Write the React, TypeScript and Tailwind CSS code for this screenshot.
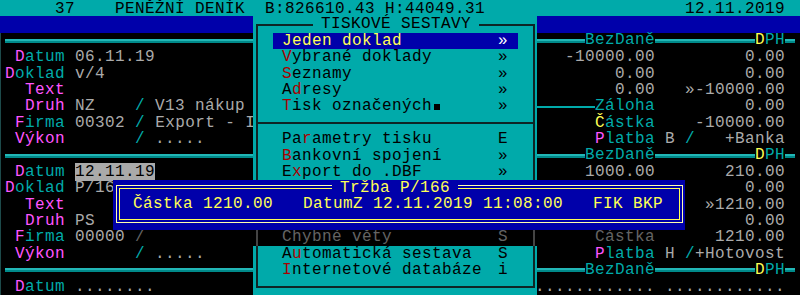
import React from "react";

type Seg = [string, string?];

const MAG = "text-[#FF55FF]";
const TEAL = "text-[#00AAAA]";
const GRAY = "text-[#AAAAAA]";
const YEL = "text-[#FFFF55]";
const DIM = "text-[#646464]";
const RED = "text-[#AA0000]";
const SEL = "bg-[#AAAAAA] text-black";

const row = "h-[16.4px] whitespace-pre";

function Segs({ segs }: { segs: Seg[] }) {
  return (
    <>
      {segs.map(([t, c], i) => (
        <span key={i} className={c}>
          {t}
        </span>
      ))}
    </>
  );
}

function DLine({ className }: { className: string }) {
  return <div className={"h-[4px] shrink-0 bg-[#008a8a] border-t-2 border-[#22b6b6] " + className} />;
}

const leftRows: (Seg[] | "line")[] = [
  "line",
  [[" "], ["D", MAG], ["atum", TEAL], [" "], ["06.11.19", GRAY]],
  [["D", MAG], ["oklad", TEAL], [" "], ["v/4", GRAY]],
  [["  "], ["Text", MAG]],
  [["  "], ["Druh", MAG], [" "], ["NZ", GRAY], ["    "], ["/", TEAL], [" "], ["V13 nákup", GRAY]],
  [[" "], ["F", MAG], ["irma", TEAL], [" "], ["00302", GRAY], [" "], ["/", TEAL], [" "], ["Export - I", GRAY]],
  [[" "], ["Výkon", MAG], ["       "], ["/", TEAL], [" "], [".....", GRAY]],
  "line",
  [[" "], ["D", MAG], ["atum", TEAL], [" "], ["12.11.19", SEL]],
  [["D", MAG], ["oklad", TEAL], [" "], ["P/166", GRAY]],
  [["  "], ["Text", MAG]],
  [["  "], ["Druh", MAG], [" "], ["PS", GRAY]],
  [[" "], ["F", MAG], ["irma", TEAL], [" "], ["00000", GRAY], [" "], ["/", DIM]],
  [[" "], ["Výkon", MAG], ["       "], ["/", TEAL], [" "], [".....", GRAY]],
  "line",
  [[" "], ["D", MAG], ["atum", TEAL], [" "], ["........", GRAY]],
];

function LeftPanel() {
  return (
    <div className="w-[253px] shrink-0 overflow-hidden">
      <div className="h-[16.4px] bg-[#0000AA]" />
      <div className="shadow-[inset_1px_0_0_#1d4a4a]">
        {leftRows.map((r, i) =>
          r === "line" ? (
            <div key={i} className="flex h-[16.4px] items-center pl-[5px]">
              <DLine className="w-full" />
            </div>
          ) : (
            <div key={i} className={row + " pl-[5px]"}>
              <Segs segs={r} />
            </div>
          )
        )}
      </div>
    </div>
  );
}

function HeadLine() {
  return (
    <div className="flex h-[16.4px] items-center">
      <DLine className="w-[48px]" />
      <span className={TEAL}>BezDaně</span>
      <DLine className="w-[100px]" />
      <span className={YEL}>D</span>
      <span className={TEAL}>PH</span>
      <DLine className="w-[10px]" />
    </div>
  );
}

function Nums({ a, b }: { a: React.ReactNode; b: React.ReactNode }) {
  return (
    <div className="flex h-[16.4px] pl-[8px] text-[#AAAAAA]">
      <span className="w-[110px] whitespace-pre text-right">{a}</span>
      <span className="w-[130px] whitespace-pre text-right">{b}</span>
    </div>
  );
}

function RightPanel() {
  return (
    <div className="flex-1 overflow-hidden">
      <div className="h-[16.4px] bg-[#0000AA]" />
      <HeadLine />
      <Nums a="-10000.00" b="0.00" />
      <Nums a="0.00" b="0.00" />
      <Nums a="0.00" b="»-10000.00" />
      <div className="flex h-[16.4px] items-center">
        <div className="h-[2px] w-[58px] bg-[#00AAAA]" />
        <span className={TEAL + " w-[60px]"}>Záloha</span>
        <span className="w-[130px] text-right text-[#AAAAAA]">0.00</span>
      </div>
      <Nums a={<Segs segs={[["Č", YEL], ["ástka", TEAL]]} />} b="-10000.00" />
      <Nums
        a={<Segs segs={[["P", MAG], ["latba", TEAL]]} />}
        b={<Segs segs={[[" B"], [" /", TEAL], ["   +Banka"]]} />}
      />
      <HeadLine />
      <Nums a="1000.00" b="210.00" />
      <Nums a="" b="0.00" />
      <Nums a="" b="»1210.00" />
      <Nums a="" b="0.00" />
      <Nums a={<span className={DIM}>Částka</span>} b="1210.00" />
      <Nums
        a={<Segs segs={[["P", MAG], ["latba", TEAL]]} />}
        b={<Segs segs={[[" H"], [" /", TEAL], ["+Hotovost"]]} />}
      />
      <HeadLine />
      <div className={row + " -ml-[2px] text-[#AAAAAA]"}>............ ............</div>
    </div>
  );
}

type Item = { parts: Seg[]; k: string; active?: boolean; mark?: boolean } | "sep" | "empty" | "shadow";

const items: Item[] = [
  { parts: [["Jeden doklad", YEL]], k: "»", active: true },
  { parts: [["V", RED], ["ybrané doklady"]], k: "»" },
  { parts: [["S", RED], ["eznamy"]], k: "»" },
  { parts: [["A"], ["d", RED], ["resy"]], k: "»" },
  { parts: [["T", RED], ["isk označených"]], k: "»", mark: true },
  "sep",
  { parts: [["Pa"], ["r", RED], ["ametry tisku"]], k: "E" },
  { parts: [["B", RED], ["ankovní spojení"]], k: "»" },
  { parts: [["E"], ["x", RED], ["port do .DBF"]], k: "»" },
  "empty",
  "empty",
  "empty",
  "shadow",
  { parts: [["A"], ["u", RED], ["tomatická sestava"]], k: "S" },
  { parts: [["I", RED], ["nternetové databáze"]], k: "i" },
];

function Menu() {
  return (
    <div className="relative h-[278.8px] w-[284px] shrink-0 bg-[#00AAAA] text-black">
      <div className="ml-[3px] mr-[2px] mt-[7.2px] h-[264.4px] border-2 border-[#0e2626] pt-[7.2px]">
        {items.map((it, i) => {
          if (it === "sep")
            return (
              <div key={i} className="flex h-[16.4px] items-center">
                <div className="h-[2px] w-full bg-[#0e2626]" />
              </div>
            );
          if (it === "empty") return <div key={i} className="h-[16.4px]" />;
          if (it === "shadow")
            return (
              <div key={i} className="-ml-[5px] -mr-[4px] flex h-[16.4px] bg-black text-[#646464]">
                <div className="w-[3px]" />
                <div className="w-[2px] bg-[#444]" />
                <div className="flex w-[275px] pl-[24px]">
                  <span className="w-[216px] whitespace-pre">Chybné věty</span>
                  <span>S</span>
                </div>
                <div className="w-[2px] bg-[#444]" />
              </div>
            );
          return (
            <div
              key={i}
              className={
                "ml-[15px] flex h-[16.4px] w-[245px] pl-[9px] " + (it.active ? "bg-[#0000AA]" : "")
              }
            >
              <span className="w-[216px] whitespace-pre">
                <Segs segs={it.parts} />
                {it.mark && <span className="mx-[2px] inline-block h-[6px] w-[6px] bg-black" />}
              </span>
              <span className={it.active ? "text-white" : ""}>{it.k}</span>
            </div>
          );
        })}
      </div>
      <div className="absolute left-[60px] top-0 h-[16.4px] whitespace-pre bg-[#00AAAA] px-[8px]">
        TISKOVÉ SESTAVY
      </div>
    </div>
  );
}

function Dialog() {
  return (
    <div className="absolute left-[113px] top-[180.4px] h-[49.2px] w-[572px] bg-[#0000AA] text-[#FFFF55]">
      <div className="ml-[3px] mr-[2px] mt-[4.6px] h-[37.6px] border border-[#FFFFAA] p-[2px]">
        <div className="h-full border border-[#FFFF55] pl-[13px] pt-[6.8px]">
          <div className={row}>Částka 1210.00   DatumZ 12.11.2019 11:08:00   FIK BKP</div>
        </div>
      </div>
      <div className="absolute left-[219px] top-0 h-[16.4px] whitespace-pre bg-[#0000AA] px-[8px]">
        Tržba P/166
      </div>
    </div>
  );
}

export default function App() {
  return (
    <div className="relative h-[295px] w-[800px] overflow-hidden bg-black font-['Liberation_Mono','DejaVu_Sans_Mono',monospace] text-[16px] leading-[17.6px] tracking-[0.4px]">
      <div className={row + " bg-[#00AAAA] pl-[5px] pt-[1px] text-black"}>
        {"     37    PENĚŽNÍ DENÍK  B:826610.43 H:44049.31                    12.11.2019"}
      </div>
      <div className="flex">
        <LeftPanel />
        <Menu />
        <RightPanel />
      </div>
      <Dialog />
    </div>
  );
}
